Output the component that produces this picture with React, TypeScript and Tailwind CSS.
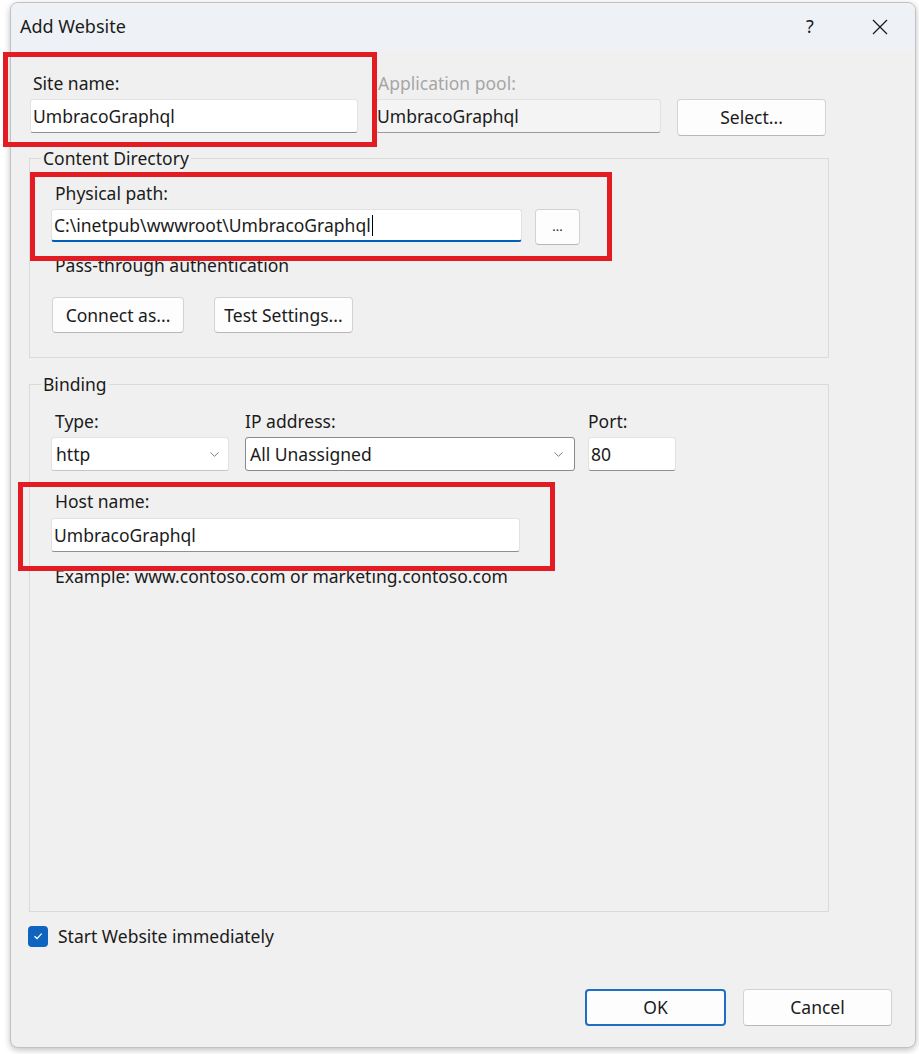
import { ChevronDown } from "lucide-react";

const font = { fontFamily: '"Noto Sans", "Open Sans", sans-serif' };

function Label({ text, className = "" }: { text: string; className?: string }) {
  return <div className={`h-[22px] leading-[22px] text-[17.5px] text-[#1b1b1b] whitespace-nowrap ${className}`}>{text}</div>;
}

function TextBox({ value, className = "", focused = false, disabled = false }: { value: string; className?: string; focused?: boolean; disabled?: boolean }) {
  return (
    <div
      className={`flex items-center rounded-[3px] border border-[#e2e2e2] pl-[2px] text-[17.5px] text-[#1b1b1b] ${
        disabled ? "bg-[#f4f4f4] border-b-[#9b9b9b]" : "bg-white"
      } ${focused ? "border-b-2 border-b-[#005fb8]" : "border-b-[#8f8f8f]"} ${className}`}
    >
      <span className="whitespace-nowrap">{value}</span>
      {focused && <span className="ml-[1px] h-[21px] w-[1px] bg-black" />}
    </div>
  );
}

function Button({ text, className = "", primary = false }: { text: string; className?: string; primary?: boolean }) {
  return (
    <button
      className={`flex items-center justify-center rounded-[4px] bg-[#fdfdfd] text-[17.5px] text-[#1b1b1b] ${
        primary ? "border-2 border-[#1c6fc4]" : "border border-[#d3d3d3] border-b-[#b8b8b8]"
      } ${className}`}
    >
      {text}
    </button>
  );
}

function Combo({ value, className = "", outlined = false }: { value: string; className?: string; outlined?: boolean }) {
  return (
    <div
      className={`flex items-center justify-between rounded-[3px] bg-white pl-[4px] text-[17.5px] text-[#1b1b1b] ${
        outlined ? "border border-[#8a8a8a] pr-[8px]" : "border border-[#e2e2e2] border-b-[#c4c4c4] pr-[6px]"
      } ${className}`}
    >
      <span>{value}</span>
      <ChevronDown size={15} strokeWidth={1.3} className="text-[#5f5f5f]" />
    </div>
  );
}

export default function App() {
  return (
    <div className="relative h-[1054px] w-[919px] overflow-hidden bg-white pl-[10px] pt-[2px]" style={font}>
      <div className="flex h-[1046px] w-[906px] flex-col overflow-hidden rounded-[8px] border border-[#c2c2c2] bg-[#f0f0f0] shadow-[0_2px_6px_rgba(0,0,0,0.25)]">
        {/* Title bar */}
        <div className="flex h-[47px] shrink-0 items-center bg-[#eef2f6] pl-[9px] pr-[12px]">
          <span className="text-[18px] text-[#1b1b1b]">Add Website</span>
          <div className="ml-auto flex items-center gap-[24px]">
            <span className="flex w-[46px] justify-center text-[18px] text-[#1b1b1b]">?</span>
            <span className="flex w-[46px] justify-center">
              <svg width="16" height="16" viewBox="0 0 16 16" stroke="#1b1b1b" strokeWidth="1.3">
                <path d="M1 1L15 15M15 1L1 15" />
              </svg>
            </span>
          </div>
        </div>

        {/* Body */}
        <div className="flex flex-1 flex-col pl-[18px] pt-[22px]">
          {/* Site name / app pool */}
          <div className="flex items-start">
            <div className="ml-[1px] w-[328px]">
              <Label text="Site name:" className="ml-[3px]" />
              <TextBox value="UmbracoGraphql" className="mt-[5px] h-[34px]" />
            </div>
            <div className="ml-[18px] w-[285px]">
              <Label text="Application pool:" className="ml-[2px] !text-[#a6a6a6]" />
              <TextBox value="UmbracoGraphql" disabled className="mt-[5px] h-[34px] !pl-0" />
            </div>
            <Button text="Select..." className="ml-[16px] mt-[27px] h-[37px] w-[149px]" />
          </div>

          {/* Content Directory */}
          <fieldset className="mt-[11px] w-[800px] border border-[#dadada]">
            <legend className="ml-[11px] px-[2px] text-[17.5px] leading-[22px] text-[#1b1b1b]">Content Directory</legend>
            <div className="pb-[24px] pl-[21px]">
              <Label text="Physical path:" className="ml-[4px] mt-[13px]" />
              <div className="mt-[5px] flex items-start">
                <TextBox value="C:\inetpub\wwwroot\UmbracoGraphql" focused className="h-[33px] w-[471px]" />
                <Button text="..." className="ml-[13px] h-[36px] w-[45px] !text-[13px]" />
              </div>
              <Label text="Pass-through authentication" className="ml-[4px] mt-[9px]" />
              <div className="ml-[1px] mt-[21px] flex">
                <Button text="Connect as..." className="h-[36px] w-[132px]" />
                <Button text="Test Settings..." className="ml-[30px] h-[36px] w-[139px]" />
              </div>
            </div>
          </fieldset>

          {/* Binding */}
          <fieldset className="mt-[15px] w-[800px] flex-1 border border-[#dadada]">
            <legend className="ml-[11px] px-[2px] text-[17.5px] leading-[22px] text-[#1b1b1b]">Binding</legend>
            <div className="pl-[21px]">
              <div className="mt-[15px] flex items-start">
                <div className="w-[178px]">
                  <Label text="Type:" className="ml-[4px]" />
                  <Combo value="http" className="mt-[5px] h-[34px]" />
                </div>
                <div className="ml-[16px] w-[330px]">
                  <Label text="IP address:" />
                  <Combo value="All Unassigned" outlined className="mt-[5px] h-[34px]" />
                </div>
                <div className="ml-[13px] w-[88px]">
                  <Label text="Port:" />
                  <TextBox value="80" className="mt-[5px] h-[34px]" />
                </div>
              </div>
              <Label text="Host name:" className="ml-[4px] mt-[19px]" />
              <TextBox value="UmbracoGraphql" className="mt-[6px] h-[34px] w-[469px]" />
              <Label text="Example: www.contoso.com or marketing.contoso.com" className="ml-[4px] mt-[13px]" />
            </div>
          </fieldset>

          {/* Start immediately */}
          <div className="ml-[-1px] mt-[13px] flex items-center">
            <span className="flex h-[21px] w-[20px] items-center justify-center rounded-[4px] bg-[#0f64c0]">
              <svg width="12" height="12" viewBox="0 0 12 12" fill="none" stroke="white" strokeWidth="1.3">
                <path d="M2.5 6.3L5 8.6L9.6 3.6" />
              </svg>
            </span>
            <span className="ml-[10px] text-[17.5px] leading-[22px] text-[#1b1b1b]">Start Website immediately</span>
          </div>

          {/* Footer buttons */}
          <div className="mt-[42px] flex justify-end gap-[17px] pb-[21px] pr-[23px]">
            <Button text="OK" primary className="h-[37px] w-[141px]" />
            <Button text="Cancel" className="h-[37px] w-[149px]" />
          </div>
        </div>
      </div>

      {/* Red annotation boxes */}
      <div className="absolute left-[3px] top-[52px] h-[95px] w-[374px] border-[5px] border-[#e31b23]" />
      <div className="absolute left-[30px] top-[172px] h-[89px] w-[582px] border-[5px] border-[#e31b23]" />
      <div className="absolute left-[18px] top-[482px] h-[89px] w-[537px] border-[5px] border-[#e31b23]" />
    </div>
  );
}
